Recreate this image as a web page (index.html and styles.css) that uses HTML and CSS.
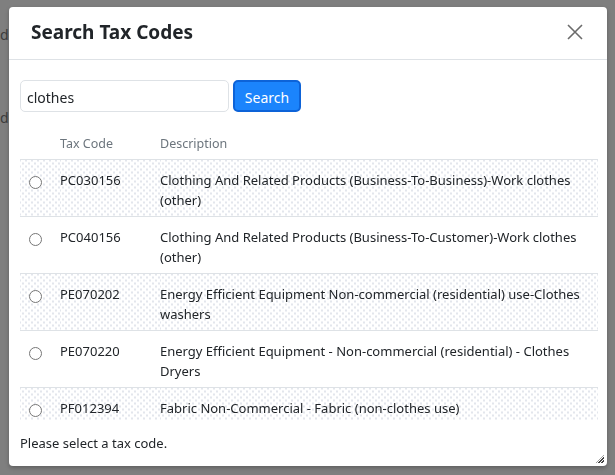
FILE: index.html
```html
<!DOCTYPE html>
<html>
<head>
  <meta charset="utf-8" />
  <title>Search Tax Codes</title>
  <link rel="stylesheet" href="styles.css">
</head>
<body>
  <!-- page behind the dialog -->
  <div class="page">
    <p class="page-line line-one">de</p>
    <p class="page-line line-two">de</p>
  </div>

  <div class="backdrop"></div>

  <div class="modal">
    <div class="modal-header">
      <h2 class="modal-title">Search Tax Codes</h2>
      <button class="close-btn" aria-label="Close">
        <svg width="16" height="16" viewBox="0 0 16 16">
          <path d="M1 1 L15 15 M15 1 L1 15" stroke="#6b6b6b" stroke-width="1.6" fill="none" />
        </svg>
      </button>
    </div>

    <div class="modal-body">
      <div class="search-row">
        <input type="text" class="search-input" value="clothes" />
        <button class="search-btn">Search</button>
      </div>

      <div class="table-wrap">
        <table class="codes">
          <thead>
            <tr>
              <th class="col-radio"></th>
              <th class="col-code">Tax Code</th>
              <th>Description</th>
            </tr>
          </thead>
          <tbody>
            <tr class="striped">
              <td class="col-radio"><input type="radio" name="code" /></td>
              <td class="col-code">PC030156</td>
              <td>Clothing And Related Products (Business-To-Business)-Work clothes (other)</td>
            </tr>
            <tr>
              <td class="col-radio"><input type="radio" name="code" /></td>
              <td class="col-code">PC040156</td>
              <td>Clothing And Related Products (Business-To-Customer)-Work clothes (other)</td>
            </tr>
            <tr class="striped">
              <td class="col-radio"><input type="radio" name="code" /></td>
              <td class="col-code">PE070202</td>
              <td>Energy Efficient Equipment Non-commercial (residential) use-Clothes washers</td>
            </tr>
            <tr>
              <td class="col-radio"><input type="radio" name="code" /></td>
              <td class="col-code">PE070220</td>
              <td>Energy Efficient Equipment - Non-commercial (residential) - Clothes Dryers</td>
            </tr>
            <tr class="striped">
              <td class="col-radio"><input type="radio" name="code" /></td>
              <td class="col-code">PF012394</td>
              <td>Fabric Non-Commercial - Fabric (non-clothes use)</td>
            </tr>
          </tbody>
        </table>
      </div>

      <p class="hint">Please select a tax code.</p>
    </div>
    <div class="resize-grip"></div>
  </div>
</body>
</html>
```

FILE: styles.css
```css
html, body {
  margin: 0;
  padding: 0;
  height: 100%;
  font-family: "Noto Sans", "Open Sans", sans-serif;
  color: #212529;
  background: #fff;
  overflow: hidden;
}

/* Seite hinter dem Dialog */
.page-line {
  margin: 0;
  font-size: 14px;
  color: #7a7a7a;
  white-space: nowrap;
}

.line-one {
  padding-top: 25px;
}

.line-two {
  padding-top: 64px;
}

.backdrop {
  position: fixed;
  inset: 0;
  background: rgba(0, 0, 0, 0.5);
}

/* Dialog */
.modal {
  position: absolute;
  left: 9px;
  top: 7px;
  width: 598px;
  height: 459px;
  background: #fff;
  border-radius: 4px;
  box-shadow: 0 2px 4px rgba(0, 0, 0, 0.25);
  display: flex;
  flex-direction: column;
  box-sizing: border-box;
}

.modal-header {
  display: flex;
  align-items: center;
  justify-content: space-between;
  height: 53px;
  padding: 0 24px 2px 22px;
  border-bottom: 1px solid #dee2e6;
  box-sizing: border-box;
}

.modal-title {
  margin: 0;
  font-size: 19px;
  font-weight: 700;
  color: #212529;
}

.close-btn {
  border: none;
  background: none;
  padding: 0;
  width: 16px;
  height: 16px;
  cursor: pointer;
}

.modal-body {
  flex: 1;
  display: flex;
  flex-direction: column;
  padding: 20px 9px 0 11px;
  min-height: 0;
}

.search-row {
  display: flex;
  gap: 4px;
  height: 32px;
}

.search-input {
  width: 209px;
  box-sizing: border-box;
  border: 1px solid #dee2e6;
  border-radius: 5px;
  padding: 2px 6px 0;
  font-family: inherit;
  font-size: 14px;
  color: #212529;
}

.search-btn {
  width: 68px;
  box-sizing: border-box;
  background: #1b84fc;
  border: 2px solid #0d63d8;
  border-radius: 5px;
  color: #fff;
  font-family: inherit;
  font-size: 14px;
  padding: 2px 0 0;
}

/* Tabelle mit Scrollbereich */
.table-wrap {
  margin-top: 16px;
  height: 292px;
  overflow: hidden;
}

.codes {
  width: 100%;
  border-collapse: collapse;
  font-size: 13px;
}

.codes th {
  text-align: left;
  font-weight: 400;
  color: #6c757d;
  height: 31px;
  padding: 0;
  border-bottom: 1px solid #dee2e6;
  font-size: 12.5px;
}

.codes td {
  vertical-align: top;
  padding: 10px 0 6px 0;
  line-height: 20px;
  border-bottom: 1px solid #dee2e6;
}

.codes tbody tr {
  height: 56px;
}

.codes tr.striped td {
  background-image:
    radial-gradient(circle, #e2e5ec 0.7px, transparent 1px),
    radial-gradient(circle, #e2e5ec 0.7px, transparent 1px);
  background-size: 6px 6px;
  background-position: 0 0, 3px 3px;
}

.col-radio {
  width: 40px;
}

.col-radio input {
  margin: 6px 0 0 9px;
  width: 13px;
  height: 13px;
}

.col-code {
  width: 100px;
}

.hint {
  margin: 0;
  padding-top: 14px;
  font-size: 13px;
}

.resize-grip {
  position: absolute;
  right: 3px;
  bottom: 3px;
  width: 8px;
  height: 8px;
  background: repeating-linear-gradient(135deg, transparent 0 1px, #444 1px 2px);
  clip-path: polygon(100% 0, 100% 100%, 0 100%);
}
```
